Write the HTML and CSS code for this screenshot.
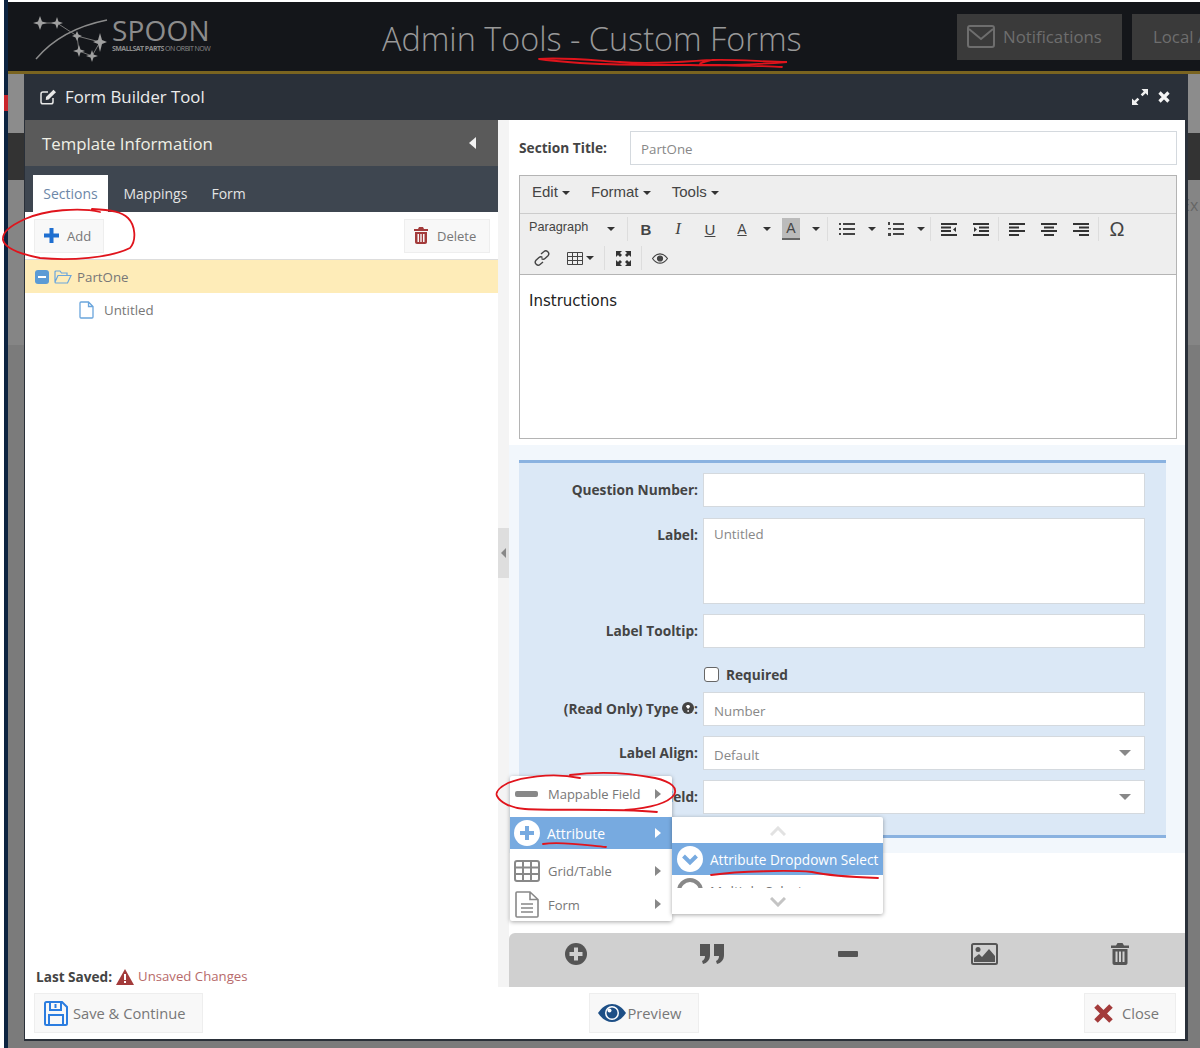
FILE: index.html
```html
<!DOCTYPE html>
<html lang="en">

<head>
    <meta charset="UTF-8">
    <meta name="viewport" content="width=device-width, initial-scale=1.0">
    <title>Admin Tools - Custom Forms</title>
    <link rel="stylesheet" href="styles.css">
</head>

<body>
    <div class="edge-white"></div>
    <div class="edge-navy"><div class="edge-mark"></div></div>

    <div class="app">
        <header class="top-header">
            <div class="logo">
                <svg class="logo-art" width="80" height="52" viewBox="30 11 80 52">
                    <path d="M34 59C50 40 75 26 105 20" fill="none" stroke="#8c8c8c" stroke-width="1.4"/>
                    <path d="M38 23H55L75 36L98 42L90 56L77 51L75 36" fill="none" stroke="#777" stroke-width="1"/>
                    <path d="M38 16L40 21.500L45 23L40 24.500L38 30L36 24.500L31 23L36 21.500Z" fill="#a0a0a0"/>
                    <path d="M55 17L56.500 21.500L61 23L56.500 24.500L55 29L53.500 24.500L49 23L53.500 21.500Z" fill="#a0a0a0"/>
                    <path d="M75 31L76.500 34.500L80 36L76.500 37.500L75 41L73.500 37.500L70 36L73.500 34.500Z" fill="#a0a0a0"/>
                    <path d="M98 33L100 40L105 42L100 44L98 52L96 44L91 42L96 40Z" fill="#a0a0a0"/>
                    <path d="M77 45L78.500 49.500L83 51L78.500 52.500L77 57L75.500 52.500L71 51L75.500 49.500Z" fill="#a0a0a0"/>
                    <path d="M90 50L91.500 54.500L96 56L91.500 57.500L90 62L88.500 57.500L84 56L88.500 54.500Z" fill="#a0a0a0"/>
                </svg>
                <div class="logo-text">
                    <div class="logo-name">SPOON</div>
                    <div class="logo-tag"><b>SMALLSAT PARTS</b> ON ORBIT NOW</div>
                </div>
            </div>
            <div class="page-title">Admin Tools - Custom Forms</div>
            <div class="head-btn notify-btn">
                <svg width="28" height="23" viewBox="0 0 28 23" fill="none" stroke="#6e6e6e" stroke-width="2"><rect x="1" y="1" width="26" height="21" rx="2"/><path d="M2 4L14 14L26 4"/></svg>
                Notifications
            </div>
            <div class="head-btn local-btn">Local Admin</div>
        </header>

        <div class="workspace">
            <div class="strip strip-left">
                <div class="band band-light"></div>
                <div class="band band-dark"></div>
                <div class="band band-mid"></div>
            </div>

            <div class="modal-wrap">
                <div class="modal">
                    <div class="modal-title">
                        <svg width="17" height="16" viewBox="0 0 17 16" fill="none" stroke="#e8e8e8" stroke-width="1.500"><path d="M13 9V13C13 14 12.300 14.800 11 14.800H3C1.800 14.800 1 14 1 13V5C1 3.800 1.800 3 3 3H8"/><path d="M6 8L13.500 .8L16 3.300L8.600 10.500L5.800 11Z" fill="#e8e8e8" stroke="none"/></svg>
                        <span class="modal-name">Form Builder Tool</span>
                        <svg class="expand-icon" width="16" height="16" viewBox="0 0 16 16" fill="#f0f0f0"><path d="M9.500 0H16V6.500L13.600 4.200L10.500 7.300L8.700 5.500L11.800 2.400ZM6.500 16H0V9.500L2.400 11.800L5.500 8.700L7.300 10.500L4.200 13.600Z"/></svg>
                        <svg class="close-icon" width="12" height="12" viewBox="0 0 12 12" stroke="#f4f4f4" stroke-width="3.200"><path d="M1.500 1.500L10.500 10.500M10.500 1.500L1.500 10.500"/></svg>
                    </div>

                    <div class="panes">
                        <section class="left-pane">
                            <div class="pane-head">
                                <span>Template Information</span>
                                <svg width="7" height="12" viewBox="0 0 7 12" fill="#f2f2f2"><path d="M7 0V12L0 6Z"/></svg>
                            </div>
                            <div class="tabs">
                                <div class="tab tab-active">Sections</div>
                                <div class="tab tab-map">Mappings</div>
                                <div class="tab">Form</div>
                            </div>
                            <div class="tree-tools">
                                <div class="soft-btn add-btn">
                                    <svg width="15" height="15" viewBox="0 0 15 15" fill="#1f6fd0"><path d="M5.500 0H9.500V5.500H15V9.500H9.500V15H5.500V9.500H0V5.500H5.500Z"/></svg>
                                    Add
                                </div>
                                <div class="soft-btn delete-btn">
                                    <svg width="14" height="17" viewBox="0 0 14 17" fill="#a33b3b"><path d="M5 0H9L10 2H14V4H0V2H4ZM1 5H13V15C13 16 12.300 17 11 17H3C1.800 17 1 16 1 15ZM3.500 7V15H5V7ZM6.300 7V15H7.700V7ZM9 7V15H10.500V7Z"/></svg>
                                    Delete
                                </div>
                            </div>
                            <div class="tree-row tree-selected">
                                <span class="tree-toggle"></span>
                                <svg width="18" height="14" viewBox="0 0 18 14" fill="none" stroke="#6aa5dc" stroke-width="1.200"><path d="M1 12V2C1 1.300 1.400 1 2 1H6L7.500 3H13V5.500M1 12L4 5.500H17L13.500 13H2C1.400 13 1 12.600 1 12Z"/></svg>
                                <span>PartOne</span>
                            </div>
                            <div class="tree-row tree-child">
                                <svg width="15" height="18" viewBox="0 0 15 18" fill="none" stroke="#6aa5dc" stroke-width="1.300"><path d="M1 2C1 1.300 1.400 1 2 1H9.500L14 5.500V16C14 16.700 13.600 17 13 17H2C1.400 17 1 16.700 1 16ZM9.500 1V5.500H14"/></svg>
                                <span>Untitled</span>
                            </div>
                            <div class="last-saved">
                                <b>Last Saved:</b>
                                <svg width="18" height="16" viewBox="0 0 18 16"><path d="M9 0L18 16H0Z" fill="#a33b3b"/><path d="M8 5H10V11H8ZM8 12H10V14H8Z" fill="#fff"/></svg>
                                <span class="unsaved">Unsaved Changes</span>
                            </div>
                        </section>

                        <div class="splitter">
                            <div class="split-handle">
                                <svg width="5" height="10" viewBox="0 0 5 10" fill="#888"><path d="M5 0V10L0 5Z"/></svg>
                            </div>
                        </div>

                        <section class="right-pane">
                            <div class="section-row">
                                <label class="section-label">Section Title:</label>
                                <div class="field section-input">PartOne</div>
                            </div>

                            <div class="editor">
                                <div class="editor-menu">
                                    <span class="menu-word">Edit <i class="caret"></i></span>
                                    <span class="menu-word">Format <i class="caret"></i></span>
                                    <span class="menu-word">Tools <i class="caret"></i></span>
                                </div>
                                <div class="editor-tools">
                                    <div class="tool-row">
                                        <div class="para-select">Paragraph<i class="caret"></i></div>
                                        <i class="sep sep-tight"></i>
                                        <div class="tool tool-b">B</div>
                                        <div class="tool tool-i">I</div>
                                        <div class="tool tool-u">U</div>
                                        <div class="tool tool-a">A</div>
                                        <div class="tool-caret"><i class="caret"></i></div>
                                        <div class="tool tool-a tool-a-fill"><span>A</span></div>
                                        <div class="tool-caret"><i class="caret"></i></div>
                                        <i class="sep sep-wide"></i>
                                        <div class="tool">
                                            <svg width="16" height="14" viewBox="0 0 16 14" fill="#444"><path d="M0 1H2V3H0ZM0 6H2V8H0ZM0 11H2V13H0ZM4 1H16V3H4ZM4 6H16V8H4ZM4 11H16V13H4Z"/></svg>
                                        </div>
                                        <div class="tool-caret"><i class="caret"></i></div>
                                        <div class="tool">
                                            <svg width="16" height="16" viewBox="0 0 16 16" fill="#444"><path d="M0 1H2V4H0ZM0 7H3V8.500H0ZM0 12H3V15H0ZM5 2H16V4H5ZM5 7H16V9H5ZM5 12H16V14H5Z"/></svg>
                                        </div>
                                        <div class="tool-caret"><i class="caret"></i></div>
                                        <i class="sep sep-tight"></i>
                                        <div class="tool">
                                            <svg width="16" height="13" viewBox="0 0 16 13" fill="#333"><path d="M0 0H16V2H0ZM0 3.500H10V5.500H0ZM0 7H10V9H0ZM0 11H16V13H0ZM15 4V9L12 6.500Z"/></svg>
                                        </div>
                                        <div class="tool">
                                            <svg width="16" height="13" viewBox="0 0 16 13" fill="#333"><path d="M0 0H16V2H0ZM6 3.500H16V5.500H6ZM6 7H16V9H6ZM0 11H16V13H0ZM1 4V9L4 6.500Z"/></svg>
                                        </div>
                                        <i class="sep sep-tight"></i>
                                        <div class="tool">
                                            <svg width="16" height="13" viewBox="0 0 16 13" fill="#333"><path d="M0 0H16V2H0ZM0 3.500H10V5.500H0ZM0 7H16V9H0ZM0 11H10V13H0Z"/></svg>
                                        </div>
                                        <div class="tool">
                                            <svg width="16" height="13" viewBox="0 0 16 13" fill="#333"><path d="M0 0H16V2H0ZM3 3.500H13V5.500H3ZM0 7H16V9H0ZM3 11H13V13H3Z"/></svg>
                                        </div>
                                        <div class="tool">
                                            <svg width="16" height="13" viewBox="0 0 16 13" fill="#333"><path d="M0 0H16V2H0ZM6 3.500H16V5.500H6ZM0 7H16V9H0ZM6 11H16V13H6Z"/></svg>
                                        </div>
                                        <i class="sep sep-tight"></i>
                                        <div class="tool tool-omega">&Omega;</div>
                                    </div>
                                    <div class="tool-row tool-row-second">
                                        <div class="tool">
                                            <svg width="16" height="16" viewBox="0 0 16 16" fill="none" stroke="#444" stroke-width="1.400"><path d="M7 4L10 1.500C11 .6 12.600 .6 13.800 1.800C15 3 15 4.600 14 5.700L11 8.500C10 9.400 8.500 9.400 7.500 8.500M9 12L6 14.500C5 15.400 3.400 15.400 2.200 14.200C1 13 1 11.400 2 10.300L5 7.500C6 6.600 7.500 6.600 8.500 7.500"/></svg>
                                        </div>
                                        <div class="tool tool-table">
                                            <svg width="16" height="13" viewBox="0 0 16 13" fill="none" stroke="#444"><path d="M.5 .5H15.500V12.500H.5ZM.5 4.500H15.500M.5 8.500H15.500M5.500 .5V12.500M10.500 .5V12.500"/></svg>
                                            <i class="caret"></i>
                                        </div>
                                        <i class="sep"></i>
                                        <div class="tool">
                                            <svg width="15" height="15" viewBox="0 0 15 15" fill="#333"><path d="M0 0H6L4 2L6 4L4 6L2 4L0 6ZM15 0V6L13 4L11 6L9 4L11 2L9 0ZM0 15V9L2 11L4 9L6 11L4 13L6 15ZM15 15H9L11 13L9 11L11 9L13 11L15 9Z"/></svg>
                                        </div>
                                        <i class="sep"></i>
                                        <div class="tool">
                                            <svg width="16" height="11" viewBox="0 0 16 11" fill="none" stroke="#444" stroke-width="1.200"><path d="M.5 5.500C3 2 5.500 .8 8 .8S13 2 15.500 5.500C13 9 10.500 10.200 8 10.200S3 9 .5 5.500Z"/><circle cx="8" cy="5.500" r="2.500" fill="#444"/></svg>
                                        </div>
                                    </div>
                                </div>
                                <div class="editor-body">Instructions</div>
                            </div>

                            <div class="question-area">
                                <div class="question-box">
                                    <label class="q-label">Question Number:</label>
                                    <div class="field q-first"></div>
                                    <label class="q-label">Label:</label>
                                    <div class="field q-text">Untitled</div>
                                    <label class="q-label">Label Tooltip:</label>
                                    <div class="field"></div>
                                    <div></div>
                                    <div class="q-check"><span class="check-box"></span>Required</div>
                                    <label class="q-label">(Read Only) Type
                                        <svg width="12" height="12" viewBox="0 0 12 12"><circle cx="6" cy="6" r="6" fill="#444"/><path d="M4 4.500C4.300 2.500 8 2.500 8 4.500C8 6 6.200 5.800 6.200 7.300M5.400 8.300H7V9.800H5.400Z" fill="#fff"/></svg>:</label>
                                    <div class="field field-type">Number</div>
                                    <label class="q-label">Label Align:</label>
                                    <div class="field field-select">Default<i class="select-arrow"></i></div>
                                    <label class="q-label">Mappable Field:</label>
                                    <div class="field field-select"><i class="select-arrow"></i></div>
                                </div>
                            </div>

                            <div class="action-bar">
                                <svg width="22" height="22" viewBox="0 0 22 22"><circle cx="11" cy="11" r="11" fill="#555"/><path d="M9 4.500H13V9H17.500V13H13V17.500H9V13H4.500V9H9Z" fill="#d0d0d0"/></svg>
                                <svg width="24" height="20" viewBox="0 0 24 20" fill="#555"><path d="M0 0H10V11C10 16 7 19 3 20L2 17C4 16 5 14.500 5 12H0ZM14 0H24V11C24 16 21 19 17 20L16 17C18 16 19 14.500 19 12H14Z"/></svg>
                                <svg width="20" height="6" viewBox="0 0 20 6" fill="#555"><rect width="20" height="6" rx="1"/></svg>
                                <svg width="27" height="22" viewBox="0 0 27 22"><rect x="1" y="1" width="25" height="20" rx="1.500" fill="#d0d0d0" stroke="#555" stroke-width="2"/><circle cx="7" cy="6.500" r="2.500" fill="#555"/><path d="M3 19V15L8 11L11 14L18 6L24 13V19Z" fill="#555"/></svg>
                                <svg width="18" height="22" viewBox="0 0 18 22" fill="#555"><path d="M6.500 0H11.500L13 2.500H18V5H0V2.500H5ZM1.500 6H16.500V20C16.500 21 15.800 22 14.500 22H3.500C2.300 22 1.500 21 1.500 20ZM4.500 8.500V19H6.500V8.500ZM8 8.500V19H10V8.500ZM11.500 8.500V19H13.500V8.500Z"/></svg>
                            </div>
                        </section>
                    </div>

                    <div class="modal-footer">
                        <div class="foot-btn save-btn">
                            <svg width="24" height="25" viewBox="0 0 24 25" fill="none" stroke="#2b7de0" stroke-width="2"><path d="M1 2.500C1 1.500 1.500 1 2.500 1H18L23 6V22.500C23 23.500 22.500 24 21.500 24H2.500C1.500 24 1 23.500 1 22.500Z"/><path d="M6 1V9H17V1M11.500 3V7M5 24V14H19V24" /></svg>
                            Save &amp; Continue
                        </div>
                        <div class="foot-btn preview-btn">
                            <svg width="28" height="18" viewBox="0 0 28 18"><path d="M0 9C4 3 9 0 14 0S24 3 28 9C24 15 19 18 14 18S4 15 0 9Z" fill="#1d4f86"/><circle cx="14" cy="9" r="7" fill="#fff"/><circle cx="14" cy="9" r="5.500" fill="#1d4f86"/><circle cx="11.500" cy="6.500" r="2" fill="#fff"/></svg>
                            Preview
                        </div>
                        <div class="foot-btn close-btn">
                            <svg width="19" height="19" viewBox="0 0 19 19" stroke="#a33b3b" stroke-width="5"><path d="M2 2L17 17M17 2L2 17"/></svg>
                            Close
                        </div>
                    </div>
                </div>
            </div>

            <div class="strip strip-right">
                <div class="band band-light"></div>
                <div class="band band-dark"></div>
                <div class="band band-mid"><span class="strip-text">Ex</span></div>
            </div>
        </div>
    </div>

    <!-- field type menu, opened over the form -->
    <div class="type-menu">
        <div class="menu-item item-first">
            <svg class="menu-icon" width="26" height="6" viewBox="0 0 26 6"><rect x="1" y="0" width="23" height="6" rx="2" fill="#888"/></svg>
            Mappable Field<i class="arrow"></i>
        </div>
        <div class="menu-item item-active">
            <svg class="menu-icon" width="26" height="26" viewBox="0 0 26 26"><circle cx="13" cy="13" r="13" fill="#fff"/><path d="M11 6H15V11H20V15H15V20H11V15H6V11H11Z" fill="#77aae0"/></svg>
            Attribute<i class="arrow"></i>
        </div>
        <div class="menu-item item-grid">
            <svg class="menu-icon" width="26" height="22" viewBox="0 0 26 22" fill="none" stroke="#888" stroke-width="2"><rect x="1" y="1" width="24" height="20" rx="2"/><path d="M1 7.500H25M1 14H25M9 1V21M17 1V21"/></svg>
            Grid/Table<i class="arrow"></i>
        </div>
        <div class="menu-item item-form">
            <svg class="menu-icon" width="26" height="27" viewBox="0 0 26 27" fill="none" stroke="#888" stroke-width="1.600"><path d="M2 2C2 1.300 2.400 1 3 1H16L24 8.500V25C24 25.700 23.600 26 23 26H3C2.400 26 2 25.700 2 25ZM16 1V8.500H24M7 13H19M7 17H19M7 21H19"/></svg>
            Form<i class="arrow"></i>
        </div>
    </div>

    <div class="type-submenu">
        <div class="scroll-arrow">
            <svg width="16" height="10" viewBox="0 0 16 10" fill="none" stroke="#e2e2e2" stroke-width="3"><path d="M1 9L8 2L15 9"/></svg>
        </div>
        <div class="sub-list">
            <div class="sub-item sub-active">
                <svg width="26" height="26" viewBox="0 0 26 26"><circle cx="13" cy="13" r="13" fill="#fff"/><path d="M6.500 10L13 16.500L19.500 10" fill="none" stroke="#77aae0" stroke-width="4"/></svg>
                Attribute Dropdown Select
            </div>
            <div class="sub-item">
                <svg width="26" height="26" viewBox="0 0 26 26"><circle cx="13" cy="13" r="11" fill="none" stroke="#888" stroke-width="4"/></svg>
                Multiple Select
            </div>
        </div>
        <div class="scroll-arrow">
            <svg width="16" height="10" viewBox="0 0 16 10" fill="none" stroke="#c4c4c4" stroke-width="3"><path d="M1 1L8 8L15 1"/></svg>
        </div>
    </div>

    <!-- red pen marks from whoever took the screenshot -->
    <svg class="pen-marks" width="1200" height="1048" viewBox="0 0 1200 1048" fill="none" stroke="#e0141c" stroke-width="1.800" stroke-linecap="round">
        <path d="M539 59C560 57 590 60 620 62C660 65 700 60 712 60C700 63 690 65 720 65C745 66 770 66 782 67M712 60C735 59 765 62 787 62C760 64 720 66 690 65C640 65 580 65 539 59"/>
        <path d="M100 212C80 207 45 210 25 219C10 226 2 232 3 240C5 248 20 254 40 258C70 261 110 258 130 248C137 240 135 225 128 218C122 212 112 210 92 209"/>
        <path d="M580 778C550 772 520 778 508 783C500 787 495 792 497 796C500 802 510 808 525 809C560 811 610 808 657 812M625 810C650 808 668 803 674 795C678 788 672 782 655 778C630 773 600 771 570 775"/>
        <path d="M543 844C560 841 585 845 606 847"/>
        <path d="M711 875C740 871 790 870 812 872C830 876 850 877 878 878"/>
    </svg>
</body>

</html>
```

FILE: styles.css
```css
* {
    box-sizing: border-box;
}

body {
    margin: 0;
    width: 1200px;
    height: 1048px;
    overflow: hidden;
    display: flex;
    background-color: #fff;
    font-family: "Open Sans", sans-serif;
    font-size: 14px;
    color: #777;
}

.edge-white {
    width: 4px;
}

.edge-navy {
    width: 4px;
    background-color: #0c2340;
    padding-top: 95px;
}

.edge-mark {
    height: 16px;
    background-color: #c9242b;
}

.app {
    width: 1192px;
    padding-top: 2px;
    display: flex;
    flex-direction: column;
}

/* header */
.top-header {
    height: 72px;
    flex-shrink: 0;
    display: flex;
    align-items: center;
    padding-left: 24px;
    background-color: #14161a;
    border-bottom: 3px solid #7a6420;
    overflow: hidden;
}

.logo {
    width: 350px;
    flex-shrink: 0;
    display: flex;
    align-items: center;
    color: #8c8c8c;
}

.logo-art {
    flex-shrink: 0;
}

.logo-text {
    margin-top: -4px;
}

.logo-name {
    font-size: 28px;
    font-weight: 400;
    line-height: 28px;
    letter-spacing: .2px;
}

.logo-tag {
    font-size: 7px;
    line-height: 10px;
    letter-spacing: -.55px;
    white-space: nowrap;
}

.page-title {
    margin-top: 2px;
    font-size: 32.400px;
    font-weight: 300;
    color: #999;
    white-space: nowrap;
}

.head-btn {
    flex-shrink: 0;
    height: 46px;
    display: flex;
    align-items: center;
    background-color: #3a3a3a;
    color: #6e6e6e;
    font-size: 16.800px;
}

.notify-btn {
    margin-left: auto;
    width: 165px;
    padding-left: 10px;
    gap: 8px;
}

.local-btn {
    margin-left: 10px;
    margin-right: -62px;
    width: 130px;
    padding-left: 21px;
}

.workspace {
    flex: 1;
    display: flex;
    background-color: #7b7b7b;
}

.strip {
    flex-shrink: 0;
    display: flex;
    flex-direction: column;
}

.strip-left {
    width: 16px;
}

.strip-right {
    width: 12px;
}

.band-light {
    height: 59px;
    background-color: #8c8c8c;
}

.band-dark {
    height: 47px;
    background-color: #333;
}

.band-mid {
    height: 165px;
    background-color: #858585;
    color: #666;
    font-size: 16px;
    padding-top: 14px;
    overflow: hidden;
}

.strip-text {
    display: block;
    width: 30px;
    margin-left: -7px;
}

/* modal */
.modal-wrap {
    width: 1164px;
    flex-shrink: 0;
    padding-bottom: 7px;
}

.modal {
    height: 100%;
    display: flex;
    flex-direction: column;
    background-color: #fff;
    border-left: 1px solid #2a3039;
    border-right: 3px solid #2a3039;
    border-bottom: 2px solid #2a3039;
}

.modal-title {
    height: 46px;
    flex-shrink: 0;
    display: flex;
    align-items: center;
    padding: 0 15px 1px;
    background-color: #2a3039;
    color: #ececec;
}

.modal-name {
    margin-left: 8px;
    font-size: 16.800px;
}

.expand-icon {
    margin-left: auto;
}

.close-icon {
    margin-left: 10px;
}

.panes {
    flex: 1;
    display: flex;
    min-height: 0;
}

.left-pane {
    width: 473px;
    flex-shrink: 0;
    display: flex;
    flex-direction: column;
}

.pane-head {
    height: 46px;
    flex-shrink: 0;
    display: flex;
    align-items: center;
    justify-content: space-between;
    padding: 0 22px 0 17px;
    background-color: #5a5a5a;
    color: #f0f0e6;
    font-size: 16.800px;
}

.tabs {
    height: 46px;
    flex-shrink: 0;
    display: flex;
    align-items: flex-end;
    padding-left: 8px;
    background-color: #3e4650;
    color: #e4e4e4;
}

.tab {
    height: 37px;
    padding: 9px 12.500px 0;
}

.tab-map {
    margin-left: 3px;
    padding-right: 11.500px;
}

.tab-active {
    width: 75px;
    padding: 9px 0 0;
    text-align: center;
    background-color: #fff;
    color: #6c87a8;
}

.tree-tools {
    height: 48px;
    flex-shrink: 0;
    display: flex;
    align-items: center;
    justify-content: space-between;
    padding: 0 8px 0 9px;
    border-bottom: 1px solid #ddd;
}

.soft-btn {
    height: 34px;
    display: flex;
    align-items: center;
    background-color: #f8f8f8;
    border: 1px solid #eee;
    font-size: 13px;
}

.add-btn {
    width: 70px;
    padding-left: 9px;
    gap: 8px;
}

.delete-btn {
    width: 86px;
    padding-left: 9px;
    gap: 9px;
}

.tree-row {
    height: 33px;
    flex-shrink: 0;
    display: flex;
    align-items: center;
    font-size: 13.300px;
}

.tree-selected {
    padding-left: 10px;
    gap: 5px;
    background-color: #feecb8;
}

.tree-toggle {
    width: 14px;
    height: 14px;
    border-radius: 3px;
    background-color: #5b9bd5;
    position: relative;
}

.tree-toggle::after {
    content: "";
    position: absolute;
    left: 3px;
    top: 6px;
    width: 8px;
    height: 2px;
    background-color: #fff;
}

.tree-child {
    padding-left: 54px;
    gap: 10px;
}

.last-saved {
    margin-top: auto;
    height: 20px;
    display: flex;
    align-items: flex-start;
    gap: 4px;
    padding-left: 11px;
    color: #444;
    font-size: 13.600px;
}

.last-saved svg {
    margin-top: 2px;
}

.unsaved {
    color: #b76a6a;
    font-size: 13.200px;
}

.splitter {
    width: 11px;
    flex-shrink: 0;
    padding-top: 408px;
    background-color: #f4f4f4;
}

.split-handle {
    height: 50px;
    display: flex;
    align-items: center;
    justify-content: center;
    background-color: #dedede;
}

.right-pane {
    flex: 1;
    min-width: 0;
    display: flex;
    flex-direction: column;
}

.section-row {
    display: flex;
    align-items: center;
    padding: 11px 8px 0 10px;
}

.section-label {
    width: 111px;
    flex-shrink: 0;
    font-weight: 700;
    font-size: 13.700px;
    color: #444;
    padding-bottom: 2px;
}

.field {
    height: 34px;
    padding: 8px 10px 0;
    background-color: #fff;
    border: 1px solid #d4d9de;
    color: #888;
    font-size: 13.300px;
    position: relative;
}

.section-input {
    flex: 1;
}

/* editor */
.editor {
    margin: 10px 8px 0 10px;
    height: 264px;
    flex-shrink: 0;
    display: flex;
    flex-direction: column;
    border: 1px solid #b4b4b4;
    font-family: "Liberation Sans", sans-serif;
    color: #444;
}

.editor-menu {
    height: 38px;
    flex-shrink: 0;
    display: flex;
    gap: 21px;
    padding: 7px 0 0 12px;
    background-color: #eee;
    border-bottom: 1px solid #ccc;
}

.menu-word {
    font-size: 15px;
}

.caret {
    display: inline-block;
    width: 0;
    height: 0;
    vertical-align: middle;
    border-left: 4px solid transparent;
    border-right: 4px solid transparent;
    border-top: 4px solid #333;
}

.editor-tools {
    height: 61px;
    flex-shrink: 0;
    background-color: #eee;
    border-bottom: 1px solid #b4b4b4;
}

.tool-row {
    height: 30px;
    display: flex;
    align-items: center;
}

.tool-row-second {
    margin-top: -1px;
    padding-left: 6px;
}

.para-select {
    width: 106px;
    padding-left: 9px;
    display: flex;
    align-items: center;
    justify-content: space-between;
    padding-right: 11px;
    font-size: 12.700px;
    padding-bottom: 5px;
}

.tool-row .para-select .caret {
    margin-top: 5px;
}

.sep {
    width: 1px;
    height: 24px;
    flex-shrink: 0;
    margin: 0 2px;
    background-color: #ddd;
}

.sep-tight {
    margin: 0 2px 0 1px;
}

.sep-wide {
    margin: 0 3px;
}

.tool {
    width: 32px;
    height: 24px;
    flex-shrink: 0;
    display: flex;
    align-items: center;
    justify-content: center;
    font-size: 15px;
}

.tool-b {
    font-weight: 700;
}

.tool-i {
    font-style: italic;
    font-family: "Liberation Serif", serif;
    font-size: 17px;
}

.tool-u {
    text-decoration: underline;
}

.tool-a {
    text-decoration: underline;
    font-size: 14px;
}

.tool-a-fill {
    text-decoration: none;
}

.tool-a-fill span {
    width: 18px;
    height: 22px;
    text-align: center;
    line-height: 20px;
    background-color: #bbb;
    border-bottom: 2px solid #666;
}

.tool-caret {
    width: 17px;
    flex-shrink: 0;
    display: flex;
    justify-content: center;
}

.tool-omega {
    font-size: 20px;
}

.tool-table {
    gap: 3px;
    width: 44px;
}

.tool-table .caret {
    flex-shrink: 0;
}

.editor-body {
    flex: 1;
    padding: 17px 9px;
    background-color: #fff;
    color: #222;
    font-family: "DejaVu Sans", sans-serif;
    font-size: 15px;
}

/* question form */
.question-area {
    margin-top: 6px;
    padding: 15px 19px 15px 10px;
    background-color: #f2f7fc;
}

.question-box {
    display: grid;
    grid-template-columns: 179px 442px;
    grid-template-rows: 35px 86px 34px 24px 34px 34px 34px;
    column-gap: 5px;
    row-gap: 10px;
    height: 378px;
    padding-top: 10px;
    background-color: #dbe8f6;
    border-top: 3px solid #8ab2e0;
    border-bottom: 3px solid #8ab2e0;
}

.q-label {
    font-weight: 700;
    font-size: 13.700px;
    color: #444;
    text-align: right;
    padding-top: 7px;
}

.q-text {
    height: 86px;
    padding-top: 6px;
}

.q-first {
    height: 34px;
}

.q-check {
    display: flex;
    align-items: flex-end;
    font-weight: 700;
    color: #444;
    gap: 7px;
    line-height: 19px;
    margin-bottom: -2px;
    margin-left: 1px;
    font-size: 13.700px;
}

.check-box {
    width: 15px;
    height: 15px;
    margin-bottom: 2px;
    border: 1px solid #666;
    border-radius: 3px;
    background-color: #fff;
}

.field-type {
    padding-top: 9px;
}

.field-select {
    padding-top: 9px;
}

.select-arrow {
    position: absolute;
    right: 13px;
    top: 13px;
    width: 0;
    height: 0;
    border-left: 6px solid transparent;
    border-right: 6px solid transparent;
    border-top: 6px solid #888;
}

.action-bar {
    margin-top: auto;
    height: 54px;
    flex-shrink: 0;
    display: flex;
    align-items: center;
    justify-content: space-between;
    padding: 0 56px 12px 56px;
    background-color: #d0d0d0;
    border-top-left-radius: 6px;
}

/* footer */
.modal-footer {
    height: 52px;
    flex-shrink: 0;
    display: flex;
    align-items: flex-start;
    justify-content: space-between;
    padding: 6px 9px;
}

.foot-btn {
    height: 40px;
    display: flex;
    align-items: center;
    background-color: #f8f8f8;
    border: 1px solid #eee;
    font-size: 14.700px;
}

.save-btn {
    width: 169px;
    padding-left: 9px;
    gap: 5px;
}

.preview-btn {
    width: 110px;
    padding-left: 8px;
    gap: 2px;
}

.close-btn {
    width: 92px;
    padding-left: 9px;
    gap: 9px;
}

/* popup menus */
.type-menu {
    position: absolute;
    left: 510px;
    top: 776px;
    width: 162px;
    height: 145px;
    background-color: #fff;
    box-shadow: 0 1px 4px rgba(0, 0, 0, .35);
    border-radius: 2px;
    padding-top: 2px;
    font-size: 13px;
}

.menu-item {
    height: 32px;
    display: flex;
    align-items: center;
    padding-left: 4px;
    gap: 8px;
    position: relative;
}

.menu-icon {
    flex-shrink: 0;
}

.item-first {
    margin-bottom: 7px;
}

.item-active {
    gap: 7px;
    background-color: #77aae0;
    color: #fff;
    margin-bottom: 6px;
    font-size: 14px;
}

.item-grid {
    margin-bottom: 1px;
}

.item-form {
    height: 33px;
}

.arrow {
    position: absolute;
    right: 11px;
    top: 11px;
    width: 0;
    height: 0;
    border-top: 5px solid transparent;
    border-bottom: 5px solid transparent;
    border-left: 6px solid #888;
}

.item-active .arrow {
    border-left-color: #fff;
}

.type-submenu {
    position: absolute;
    left: 672px;
    top: 817px;
    width: 211px;
    height: 97px;
    background-color: #fff;
    box-shadow: 0 1px 4px rgba(0, 0, 0, .35);
    border-radius: 0 2px 2px 0;
    font-size: 13.600px;
}

.scroll-arrow {
    height: 26px;
    padding-top: 2px;
    display: flex;
    align-items: center;
    justify-content: center;
}

.sub-list {
    height: 45px;
    overflow: hidden;
}

.sub-item {
    height: 32px;
    display: flex;
    align-items: center;
    gap: 7px;
    padding-left: 5px;
    white-space: nowrap;
}

.sub-active {
    background-color: #77aae0;
    color: #fff;
}

.pen-marks {
    position: absolute;
    left: 0;
    top: 0;
    pointer-events: none;
}
```
